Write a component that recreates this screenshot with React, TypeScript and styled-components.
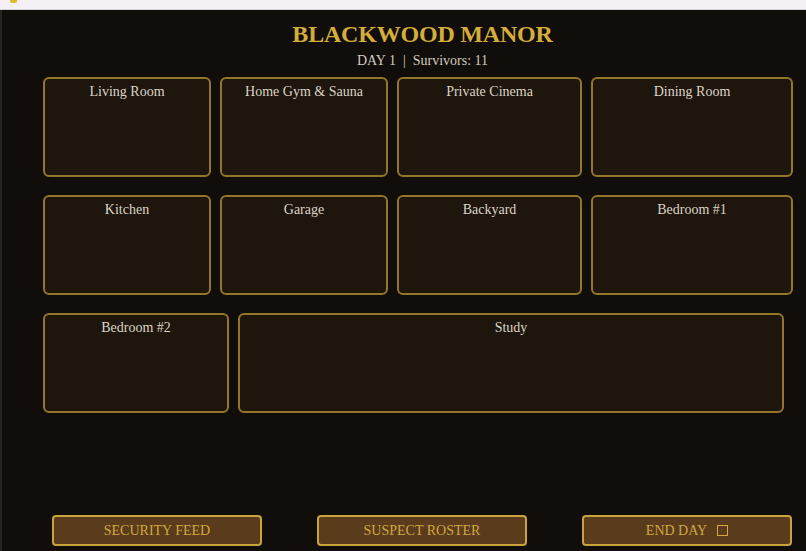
import React from "react";
import styled, { createGlobalStyle } from "styled-components";

const GlobalStyle = createGlobalStyle`
  html, body {
    margin: 0;
    padding: 0;
    background: #110d0a;
    overflow: hidden;
  }
  * { box-sizing: border-box; }
`;

const serif = `"Liberation Serif", "DejaVu Serif", serif`;

const Chrome = styled.div`
  position: relative;
  height: 10px;
  background: #f5eff6;
  border-bottom: 1px solid #d9d3da;
  overflow: hidden;
`;

const TabIcon = styled.span`
  position: absolute;
  left: 10px;
  top: -3px;
  width: 7px;
  height: 6px;
  border-radius: 2px;
  background: #e0b92c;
`;

const Screen = styled.main`
  height: calc(100vh - 10px);
  display: flex;
  flex-direction: column;
  background: #110d0a;
  border-left: 2px solid #27231f;
  padding: 10px 0 5px 41px;
  font-family: ${serif};
`;

const Column = styled.div`
  width: 759px;
  flex: 1;
  display: flex;
  flex-direction: column;
`;

const Title = styled.h1`
  margin: 0;
  text-align: center;
  font-size: 24px;
  line-height: 28px;
  font-weight: 700;
  color: #d4ad3b;
  letter-spacing: -0.2px;
`;

const Status = styled.div`
  margin-top: 4px;
  text-align: center;
  font-size: 14px;
  line-height: 18px;
  color: #d2cbbf;
`;

const Divider = styled.span`
  margin: 0 7px;
`;

const Board = styled.section`
  margin-top: 7px;
  display: flex;
  flex-direction: column;
  gap: 18px;
`;

const Floor = styled.div<{ $cols: string }>`
  display: grid;
  grid-template-columns: ${(p) => p.$cols};
  gap: 9px;
`;

const Room = styled.div`
  height: 100px;
  background: #1e150d;
  border: 2px solid #94762b;
  border-radius: 6px;
  padding-top: 4px;
  text-align: center;
  font-size: 14px;
  line-height: 18px;
  color: #dbd4c6;
`;

const Footer = styled.footer`
  margin-top: auto;
  display: flex;
  justify-content: center;
  gap: 55px;
  padding-left: 8px;
  padding-right: 9px;
`;

const ActionButton = styled.button`
  width: 210px;
  height: 31px;
  display: flex;
  align-items: center;
  justify-content: center;
  gap: 10px;
  background: #5a3b1c;
  border: 2px solid #c9a43e;
  border-radius: 4px;
  font-family: ${serif};
  font-size: 14px;
  color: #d1a840;
  text-transform: uppercase;
  cursor: pointer;
`;

const Box = styled.span`
  width: 11px;
  height: 11px;
  border: 1.5px solid #d1a840;
`;

const floors: { cols: string; rooms: string[] }[] = [
  { cols: "168px 168px 185px 202px", rooms: ["Living Room", "Home Gym & Sauna", "Private Cinema", "Dining Room"] },
  { cols: "168px 168px 185px 202px", rooms: ["Kitchen", "Garage", "Backyard", "Bedroom #1"] },
  { cols: "186px 546px", rooms: ["Bedroom #2", "Study"] },
];

export default function App() {
  return (
    <>
      <GlobalStyle />
      <Chrome>
        <TabIcon />
      </Chrome>
      <Screen>
        <Column>
          <Title>BLACKWOOD MANOR</Title>
          <Status>
            DAY 1<Divider>|</Divider>Survivors: 11
          </Status>
          <Board>
            {floors.map((f, i) => (
              <Floor key={i} $cols={f.cols}>
                {f.rooms.map((r) => (
                  <Room key={r}>{r}</Room>
                ))}
              </Floor>
            ))}
          </Board>
          <Footer>
            <ActionButton>Security Feed</ActionButton>
            <ActionButton>Suspect Roster</ActionButton>
            <ActionButton>
              End Day <Box />
            </ActionButton>
          </Footer>
        </Column>
      </Screen>
    </>
  );
}
